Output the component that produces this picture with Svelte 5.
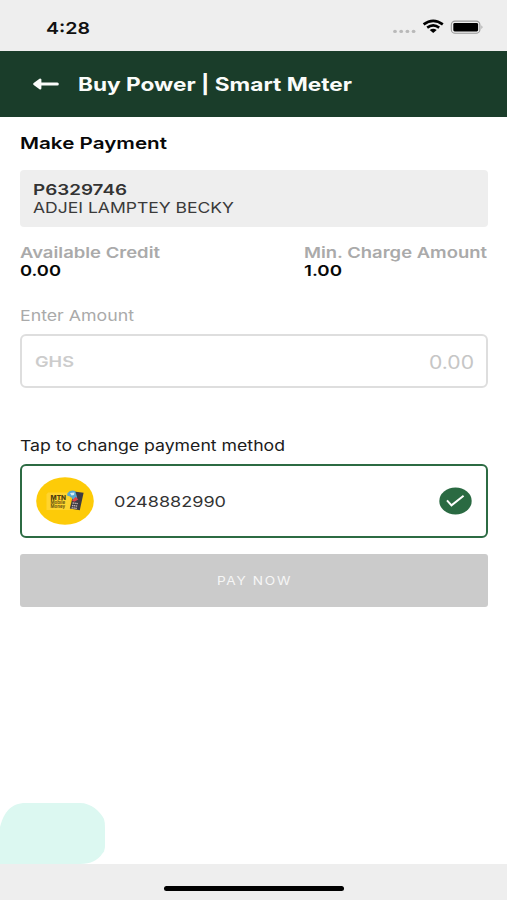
<script>
  const credits = [
    { name: 'Available Credit', nameWidth: 140, value: '0.00', valueWidth: 41 },
    { name: 'Min. Charge Amount', nameWidth: 183, value: '1.00', valueWidth: 38 },
  ];

  const dots = [2, 8.2, 14.4, 20.6];
</script>

<!-- Wide text: glyphs are stretched horizontally to fill the given width -->
{#snippet wide(text, width, cls)}
  <svg class="wide {cls}" {width} height="18">
    <text x="0" y="13.7" textLength={width} lengthAdjust="spacingAndGlyphs">{text}</text>
  </svg>
{/snippet}

<div class="screen">
  <div class="status">
    {@render wide('4:28', 44, 'clock')}
    <svg class="indicators" width="91" height="18" viewBox="0 0 91 18">
      {#each dots as cx}
        <ellipse class="dot" {cx} cy="13.4" rx="1.9" ry="1.6"/>
      {/each}
      <g class="wifi">
        <path d="M30.6 6.4 Q40.2 -0.8 49.8 6.4"/>
        <path d="M34.2 9.6 Q40.2 5.1 46.2 9.6"/>
        <path class="solid" d="M36.7 12.1 Q40.2 9.4 43.7 12.1 L40.2 15.1 Z"/>
      </g>
      <rect class="battery" x="58.3" y="3.1" width="28.6" height="12.2" rx="3.8"/>
      <rect class="charge" x="60.3" y="5.1" width="24.8" height="8.3" rx="1.4"/>
      <path class="nub" d="M88.5 7.3 Q90.4 9.2 88.5 11.1 Z"/>
    </svg>
  </div>

  <header>
    <svg class="back" width="26" height="12" viewBox="0 0 26 12">
      <path class="shaft" d="M6 6 H24.3"/>
      <path class="head" d="M1.4 6 L7.2 1.8 V10.2 Z"/>
    </svg>
    {@render wide('Buy Power | Smart Meter', 274, 'title')}
  </header>

  <main>
    {@render wide('Make Payment', 147, 'heading')}

    <section class="customer">
      {@render wide('P6329746', 94, 'meter')}
      {@render wide('ADJEI LAMPTEY BECKY', 201, 'name')}
    </section>

    <section class="credits">
      {#each credits as c}
        <div>
          {@render wide(c.name, c.nameWidth, 'muted')}
          {@render wide(c.value, c.valueWidth, 'value')}
        </div>
      {/each}
    </section>

    {@render wide('Enter Amount', 114, 'hint')}
    <div class="amount">
      {@render wide('GHS', 39, 'currency')}
      {@render wide('0.00', 45, 'placeholder')}
    </div>

    {@render wide('Tap to change payment method', 265, 'tap')}
    <div class="method">
      <svg class="logo" width="58" height="48" viewBox="0 0 58 48">
        <ellipse class="sun" cx="29" cy="24" rx="28.8" ry="23.8"/>
        <path class="card" d="M12 15.5 H34 V33 H10.5 V17.5 Z"/>
        <text class="mtn" x="14.5" y="22.8" textLength="15.5" lengthAdjust="spacingAndGlyphs">MTN</text>
        <text class="momo" x="14.5" y="27.4" textLength="14.5" lengthAdjust="spacingAndGlyphs">Mobile</text>
        <text class="momo" x="14.5" y="31.4" textLength="14.5" lengthAdjust="spacingAndGlyphs">Money</text>
        <path class="phone" d="M38 14.5 L47.6 15.8 L43.8 33.2 L33.8 31.6 Z"/>
        <path class="screen-blue" d="M31.3 16.5 Q34 12.2 39.2 14 L41.2 20.5 L37.2 23.4 Q35.8 19.5 31.3 18.8 Z"/>
        <path class="shine" d="M34 16 L38.5 15.5 L38 18 L35.5 18.5 Z"/>
        <path class="red" d="M36 23.5 L39.8 19.7 L42.3 22.5 L38.2 24.8 Z"/>
        <path class="keys" d="M36.6 26 L41.8 26.6 M36 28.5 L41.2 29.1 M35.6 30.8 L40.8 31.4"/>
      </svg>
      {@render wide('0248882990', 112, 'number')}
      <svg class="check" width="33" height="28" viewBox="0 0 33 28">
        <ellipse cx="16.5" cy="14" rx="16.2" ry="13.4"/>
        <path d="M8 13.3 L12.5 18.3 L24.6 8.7"/>
      </svg>
    </div>

    <button disabled>
      {@render wide('PAY NOW', 75, 'pay')}
    </button>
  </main>

  <svg class="blob" width="105" height="61" viewBox="0 0 105 61">
    <path d="M0 61 V24 C4 10 10 0 26 0 H80 C91 0 100 8 104 16 Q105 19 105 25 V43 Q105 48 102 51 C98 57 91 61 80 61 Z"/>
  </svg>
  <footer><div class="home"></div></footer>
</div>

<style>
  :global(body) { margin: 0; background: #fff; }

  .screen {
    display: flex;
    flex-direction: column;
    width: 507px;
    height: 900px;
    background: #fff;
    font-family: Inter, "Liberation Sans", sans-serif;
  }

  svg { display: block; flex: none; }

  /* Text */
  .wide        { overflow: visible; font-size: 15px; }
  .clock       { font-size: 16.5px; font-weight: 600; fill: #111; }
  .title       { font-size: 18.5px; font-weight: 700; fill: #fafcfa; }
  .heading     { font-size: 16.5px; font-weight: 600; fill: #080808; }
  .meter       { font-weight: 600; fill: #333; }
  .name        { font-size: 14.8px; fill: #3a3a3a; }
  .muted       { font-weight: 600; fill: #aaa; }
  .value       { font-weight: 600; fill: #080808; }
  .hint        { fill: #aaa; }
  .currency    { font-size: 14.5px; font-weight: 600; fill: #ccc; }
  .placeholder { font-size: 18px; fill: #c6c6c6; }
  .tap         { fill: #1c1c1c; }
  .number      { fill: #333; }
  .pay         { font-size: 11.5px; letter-spacing: 1.4px; fill: #f6f6f6; }

  /* Status bar */
  .status {
    display: flex;
    justify-content: space-between;
    height: 51px;
    box-sizing: border-box;
    padding: 19px 23px 0 46px;
    background: #eee;
  }
  .clock      { margin-top: 0.5px; }
  .indicators { margin-top: -1px; }
  .dot        { fill: #b9b9b9; }
  .wifi path  { fill: none; stroke: #000; stroke-width: 2.6; }
  .wifi .solid { fill: #000; stroke: none; }
  .battery    { fill: none; stroke: #999; stroke-width: 1.1; }
  .charge     { fill: #000; }
  .nub        { fill: #999; }

  /* Title bar */
  header {
    display: flex;
    align-items: center;
    gap: 19px;
    height: 66px;
    box-sizing: border-box;
    padding: 2px 33px 0;
    background: #1a3d2a;
  }
  .back       { margin-top: -2px; }
  .title      { margin-top: 2px; }
  .shaft      { fill: none; stroke: #fafcfa; stroke-width: 3; stroke-linecap: round; }
  .head       { fill: #fafcfa; stroke: #fafcfa; stroke-width: 2.4; stroke-linejoin: round; }

  main {
    display: flex;
    flex-direction: column;
    flex: 1;
    padding: 18px 19px 0 20px;
  }

  .customer {
    height: 57px;
    box-sizing: border-box;
    margin-top: 17px;
    padding: 11px 13px;
    border-radius: 4px;
    background: #eee;
  }

  .credits {
    display: flex;
    justify-content: space-between;
    margin: 17px 1px 27px 0;
  }

  .amount {
    display: flex;
    align-items: center;
    justify-content: space-between;
    height: 54px;
    box-sizing: border-box;
    margin: 9px 0 49px;
    padding: 0 12px 0 13px;
    border: 2px solid #dedede;
    border-radius: 6px;
  }
  .currency    { margin-top: 2px; }
  .placeholder { margin-top: 5px; }

  .method {
    display: flex;
    align-items: center;
    height: 74px;
    box-sizing: border-box;
    margin: 9px 0 16px;
    padding: 0 14px;
    border: 2px solid #2c6b43;
    border-radius: 6px;
  }
  .number { margin: 2px 0 0 20px; }
  .check  { margin-left: auto; }
  .check ellipse { fill: #2a6a42; }
  .check path    { fill: none; stroke: #fff; stroke-width: 2; }

  /* Mobile money logo */
  .sun         { fill: #fdcb08; }
  .card        { fill: #ffd42e; }
  .mtn         { font-size: 6.5px; font-weight: 800; fill: #4c3c10; }
  .momo        { font-size: 4.6px; font-weight: 700; fill: #6b5510; }
  .phone       { fill: #3d3a42; }
  .screen-blue { fill: #59a9cf; }
  .shine       { fill: #d6edf5; }
  .red         { fill: #e0434a; }
  .keys        { fill: none; stroke: #c9b9b5; stroke-width: 1.3; stroke-dasharray: 1.4 0.5; }

  button {
    display: flex;
    align-items: center;
    justify-content: center;
    height: 53px;
    padding: 0 0 2px;
    border: 0;
    border-radius: 3px;
    background: #cbcbcb;
    font-family: inherit;
  }

  .blob { fill: #dcf8f1; }

  footer {
    display: flex;
    justify-content: center;
    height: 36px;
    box-sizing: border-box;
    padding-top: 22px;
    background: #eee;
  }
  .home {
    width: 180px;
    height: 5px;
    border-radius: 3px;
    background: #000;
  }
</style>
